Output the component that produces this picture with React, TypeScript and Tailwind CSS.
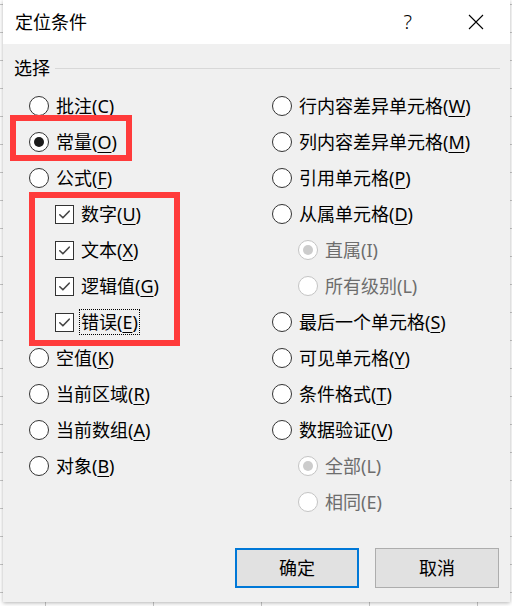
import React from 'react';

type Item = {
  label: string;
  key?: string;
  kind: 'radio' | 'check';
  checked?: boolean;
  disabled?: boolean;
  indent?: boolean;
  focus?: boolean;
};

const leftItems: Item[] = [
  { label: '批注', key: 'C', kind: 'radio' },
  { label: '常量', key: 'O', kind: 'radio', checked: true },
  { label: '公式', key: 'F', kind: 'radio' },
  { label: '数字', key: 'U', kind: 'check', checked: true, indent: true },
  { label: '文本', key: 'X', kind: 'check', checked: true, indent: true },
  { label: '逻辑值', key: 'G', kind: 'check', checked: true, indent: true },
  { label: '错误', key: 'E', kind: 'check', checked: true, indent: true, focus: true },
  { label: '空值', key: 'K', kind: 'radio' },
  { label: '当前区域', key: 'R', kind: 'radio' },
  { label: '当前数组', key: 'A', kind: 'radio' },
  { label: '对象', key: 'B', kind: 'radio' },
];

const rightItems: Item[] = [
  { label: '行内容差异单元格', key: 'W', kind: 'radio' },
  { label: '列内容差异单元格', key: 'M', kind: 'radio' },
  { label: '引用单元格', key: 'P', kind: 'radio' },
  { label: '从属单元格', key: 'D', kind: 'radio' },
  { label: '直属(I)', kind: 'radio', checked: true, disabled: true, indent: true },
  { label: '所有级别(L)', kind: 'radio', disabled: true, indent: true },
  { label: '最后一个单元格', key: 'S', kind: 'radio' },
  { label: '可见单元格', key: 'Y', kind: 'radio' },
  { label: '条件格式', key: 'T', kind: 'radio' },
  { label: '数据验证', key: 'V', kind: 'radio' },
  { label: '全部(L)', kind: 'radio', checked: true, disabled: true, indent: true },
  { label: '相同(E)', kind: 'radio', disabled: true, indent: true },
];

const Radio = ({ checked, disabled }: { checked?: boolean; disabled?: boolean }) => (
  <span
    className={`flex h-5 w-5 shrink-0 items-center justify-center rounded-full border bg-white ${
      disabled ? 'border-[#c4c4c4]' : 'border-[#333333]'
    }`}
  >
    {checked && (
      <span className={`h-[10px] w-[10px] rounded-full ${disabled ? 'bg-[#cccccc]' : 'bg-[#1a1a1a]'}`} />
    )}
  </span>
);

const Check = ({ checked }: { checked?: boolean }) => (
  <span className="flex h-[19px] w-[19px] shrink-0 items-center justify-center border border-[#333333] bg-white">
    {checked && (
      <svg width="13" height="13" viewBox="0 0 13 13" fill="none">
        <path
          d="M1.8 6.8 L4.9 9.8 L11.2 3.2"
          stroke="#444444"
          strokeWidth="1.6"
          strokeLinecap="round"
          strokeLinejoin="round"
        />
      </svg>
    )}
  </span>
);

const Row = ({ item }: { item: Item }) => (
  <div className={`flex h-9 items-center gap-[7px] ${item.indent ? 'pl-[26px]' : ''}`}>
    {item.kind === 'radio' ? (
      <Radio checked={item.checked} disabled={item.disabled} />
    ) : (
      <Check checked={item.checked} />
    )}
    <span
      className={`whitespace-nowrap leading-none ${item.disabled ? 'text-[#6d6d6d]' : 'text-black'} ${
        item.focus ? '-ml-[2px] border border-dotted border-black px-[1px] py-[3px]' : ''
      }`}
    >
      {item.label}
      {item.key && (
        <>
          (<span className="underline underline-offset-[3px] decoration-1">{item.key}</span>)
        </>
      )}
    </span>
  </div>
);

export default function App() {
  return (
    <div
      className="relative h-[606px] w-[512px] overflow-hidden bg-white pl-[3px] [background-image:linear-gradient(to_right,#c6c6c6_1px,transparent_1px),linear-gradient(to_bottom,#c6c6c6_1px,transparent_1px)] [background-size:108px_28px] [background-position:45px_4px]"
      style={{ fontFamily: '"Noto Sans", "Noto Sans CJK SC", sans-serif' }}
    >
      <div className="flex h-[602px] w-[507px] flex-col bg-[#f0f0f0] shadow-[0_1px_4px_rgba(0,0,0,0.3)]">
        {/* title bar */}
        <div className="flex h-[44px] items-center bg-white pl-3 pr-[26px]">
          <span className="text-[18px] text-black">定位条件</span>
          <span className="ml-auto mr-[56px] text-[20px] font-light text-black">?</span>
          <svg width="16" height="16" viewBox="0 0 16 16" fill="none">
            <path d="M1 1 L15 15 M15 1 L1 15" stroke="#000" strokeWidth="1.1" />
          </svg>
        </div>

        <div className="flex flex-1 flex-col px-[11px] text-[18px]">
          <div className="mt-3 flex h-6 items-center">
            <span>选择</span>
            <span className="ml-[5px] mr-[-1px] h-px flex-1 bg-[#d8d8d8]" />
          </div>

          <div className="mt-2 flex pl-[15px]">
            <div className="w-[243px]">
              {leftItems.map((it) => (
                <Row key={it.label} item={it} />
              ))}
            </div>
            <div className="flex-1">
              {rightItems.map((it) => (
                <Row key={it.label} item={it} />
              ))}
            </div>
          </div>

          <div className="mt-auto mb-[14px] flex justify-end gap-4">
            <button className="h-10 w-[124px] border-2 border-[#0078d7] bg-[#e1e1e1] text-[18px] text-black">
              确定
            </button>
            <button className="h-10 w-[124px] border border-[#adadad] bg-[#e1e1e1] text-[18px] text-black">
              取消
            </button>
          </div>
        </div>
      </div>

      {/* red annotation boxes */}
      <div className="pointer-events-none absolute left-[10px] top-[115px] h-[46px] w-[122px] border-[6px] border-[#ff3b3b]" />
      <div className="pointer-events-none absolute left-[29px] top-[192px] h-[154px] w-[151px] border-[6px] border-[#ff3b3b]" />
    </div>
  );
}
